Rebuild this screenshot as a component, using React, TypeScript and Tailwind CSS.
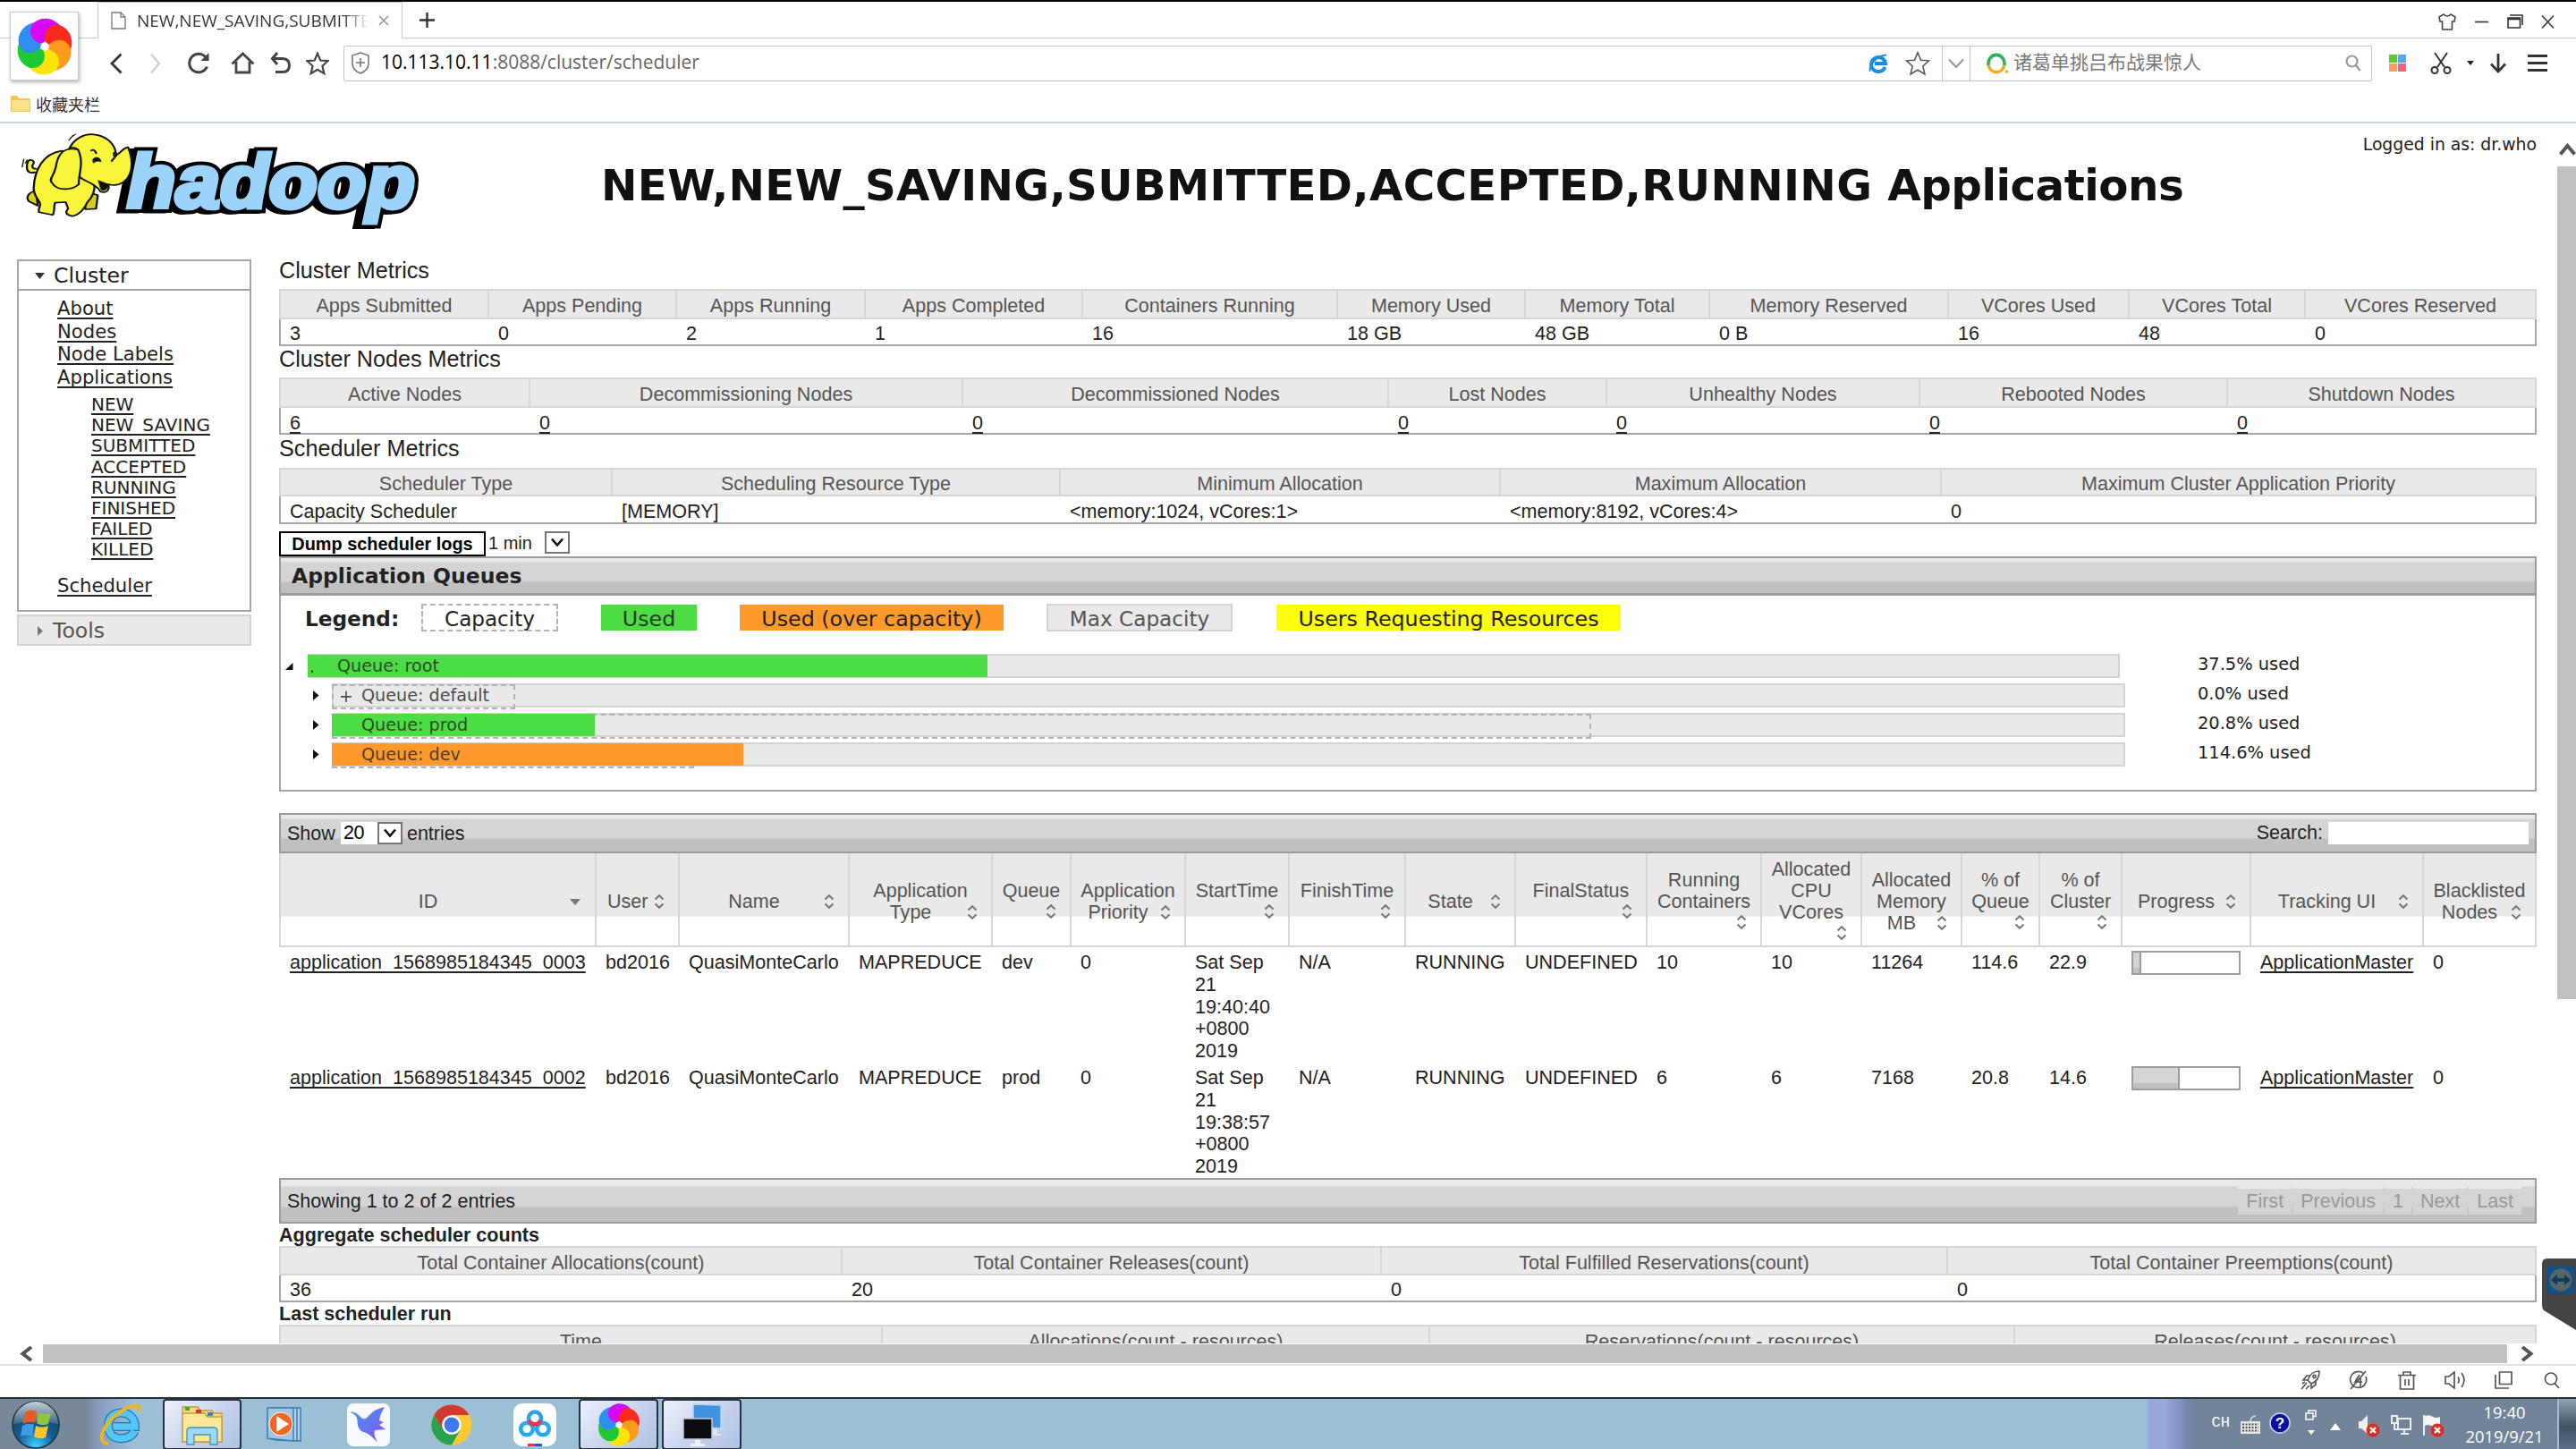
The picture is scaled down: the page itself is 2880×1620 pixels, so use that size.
import type { ReactNode } from 'react';

const UL = "underline decoration-2 underline-offset-[3px] [text-decoration-skip-ink:none]";

function Pinwheel({ size }: { size: number }) {
  const colors = ['#d908f5', '#fb2b1c', '#ff9a1a', '#ffe40a', '#1fc936', '#2f8ef2'];
  const petal = 'M0 -3 C-13 -5 -18 -19 -8 -27 C2 -34 20 -30 24 -9 C16 -18 6 -16 0 -3Z';
  return (
    <svg width={size} height={size} viewBox="-32 -32 64 64">
      {colors.map((c, i) => <path key={c} fill={c} transform={`rotate(${i * 60 - 8})`} d={petal} />)}
      <path fill={colors[0]} transform="rotate(-8)" d="M0 -3 C-13 -5 -18 -19 -8 -27 L2 -30 Q-2 -14 0 -3Z" />
      <circle r="4.5" fill="#fff" />
    </svg>
  );
}

function HadoopLogo() {
  return (
    <svg width="452" height="112" viewBox="20 145 452 112" className="overflow-visible">
      <g fontFamily="Liberation Sans, sans-serif" fontWeight="bold" fontStyle="italic" fontSize="84" strokeLinejoin="miter" strokeMiterlimit="3">
        <text x="136" y="233" textLength="322" lengthAdjust="spacingAndGlyphs" fill="#000" stroke="#000" strokeWidth="12">hadoop</text>
        <text x="142" y="232" textLength="322" lengthAdjust="spacingAndGlyphs" fill="#9bd3fb" stroke="#000" strokeWidth="13" paintOrder="stroke">hadoop</text>
        <text x="142" y="232" textLength="322" lengthAdjust="spacingAndGlyphs" fill="#9bd3fb" stroke="#9bd3fb" strokeWidth="5">hadoop</text>
      </g>
      <g transform="scale(0.4591 0.3333)" fill="#f8f53b" stroke="#111" strokeWidth="5" strokeLinejoin="round" strokeLinecap="round">
        <path fill="#d8cf1c" d="M88 640 C70 645 62 660 70 675 L92 690Z M205 640 L238 655 L234 700 L208 702Z" />
        <path d="M85 578 C66 585 62 565 68 542 C74 530 84 540 82 548 C76 556 78 566 88 566" />
        <path d="M150 506 C105 515 84 570 82 630 C82 660 96 670 98 685 C96 700 92 705 95 712 L128 721 C134 712 130 700 134 680 L160 678 L166 700 C158 712 160 720 176 725 C192 722 206 700 212 680 C226 660 232 640 230 615 L200 520Z" />
        <path d="M168 500 C180 465 205 448 228 451 C258 455 280 480 283 520 C296 512 298 496 312 494 C326 540 326 600 290 618 C276 624 266 618 264 618 C268 640 256 650 244 642 C236 620 212 610 200 600 C178 575 160 530 168 500Z" />
        <path d="M190 502 C150 490 140 525 136 560 C132 590 118 600 126 612 C140 645 178 636 192 618 C190 590 206 545 190 502Z" />
        <path fill="none" d="M168 500 C172 494 180 490 190 502 M222 505 C228 500 232 506 234 514 M272 540 L284 520 M282 512 C276 508 276 520 280 526" />
        <path fill="#111" strokeWidth="2" d="M226 535 C232 522 246 530 246 542 C238 538 232 542 228 546Z M240 606 L264 618 C262 636 252 644 246 636Z" />
        <path fill="none" strokeWidth="3" d="M168 470 L178 454 M172 462 L184 450 M54 560 L58 534 M62 548 L66 536" />
      </g>
    </svg>
  );
}

function StarIcon({ size, w = 2, color }: { size: number; w?: number; color: string }) {
  return (
    <svg width={size} height={size} viewBox="0 0 24 24" fill="none" stroke={color} strokeWidth={w} strokeLinejoin="miter">
      <path d="M12 1.5 L15 8.8 L22.8 9.3 L17 14.6 L18.8 22.3 L12 18.2 L5.2 22.3 L7 14.6 L1.2 9.3 L9 8.8Z" />
    </svg>
  );
}

function TitleBar() {
  return (
    <div className="flex h-[41px] shrink-0">
      <div className="w-[109px] border-b-[1px] border-[#b9cdd4]" />
      <div className="flex w-[341px] items-center border-x-[1px] border-t-[1px] border-[#b9cdd4] pl-[14px]">
        <svg width="17" height="20" viewBox="0 0 17 20" fill="#fff" stroke="#777" strokeWidth="1.3"><path d="M1 1 H11 L16 6 V19 H1Z M11 1 V6 H16" /></svg>
        <div className="ml-[12px] w-[262px] overflow-hidden whitespace-nowrap bg-[linear-gradient(90deg,#333_88%,#fff_99%)] bg-clip-text text-[19px] text-transparent font-['Open_Sans',sans-serif]">NEW,NEW_SAVING,SUBMITTE</div>
        <svg className="ml-[8px]" width="12" height="12" viewBox="0 0 12 12" stroke="#999" strokeWidth="1.7"><path d="M1 1 L11 11 M11 1 L1 11" /></svg>
      </div>
      <div className="flex flex-1 items-center border-b-[1px] border-[#b9cdd4]">
        <svg className="ml-[19px]" width="17" height="17" viewBox="0 0 17 17" stroke="#333" strokeWidth="2.4"><path d="M8.5 0 V17 M0 8.5 H17" /></svg>
        <div className="mt-[4px] mr-[24px] ml-auto flex items-center gap-[20px] text-[#333]">
          <svg width="20" height="19" viewBox="0 0 20 19" fill="none" stroke="#444" strokeWidth="1.6" strokeLinejoin="round"><path d="M6 1 Q10 5 14 1 L19 4 L18 9 H15.5 V18 H4.5 V9 H2 L1 4Z" /></svg>
          <svg width="17" height="17" viewBox="0 0 17 17" stroke="#444" strokeWidth="1.8"><path d="M1 8.5 H16" /></svg>
          <svg width="18" height="16" viewBox="0 0 18 16" fill="none" stroke="#333" strokeWidth="1.6"><path d="M1 4 H14.5 V15 H1Z M3 1 H17 V12 M1 5.5 H14.5" /></svg>
          <svg width="15" height="15" viewBox="0 0 15 15" stroke="#444" strokeWidth="1.7"><path d="M1 0.5 L14 14.5 M14 0.5 L1 14.5" /></svg>
        </div>
      </div>
    </div>
  );
}

function Cell({ w, children }: { w: string; children: ReactNode }) {
  return <div className={`flex shrink-0 items-center justify-center ${w}`}>{children}</div>;
}

function Toolbar() {
  return (
    <div className="flex h-[55px] shrink-0 items-center pl-[108px]">
      <Cell w="w-[44px]"><svg width="16" height="24" viewBox="0 0 16 24" fill="none" stroke="#333" strokeWidth="2.8"><path d="M13.5 1.5 L3 12 L13.5 22.5" /></svg></Cell>
      <Cell w="w-[44px]"><svg width="16" height="24" viewBox="0 0 16 24" fill="none" stroke="#ccc" strokeWidth="2"><path d="M3 1.5 L12 12 L3 22.5" /></svg></Cell>
      <Cell w="w-[52px]"><svg width="26" height="25" viewBox="0 0 26 25" fill="none" stroke="#444" strokeWidth="3"><path d="M22.5 16.5 A10.3 10.3 0 1 1 21 6" /><path d="M24.5 1 V10 H15.5Z" fill="#444" stroke="none" /></svg></Cell>
      <Cell w="w-[46px]"><svg width="27" height="25" viewBox="0 0 27 25" fill="none" stroke="#444" strokeWidth="2.8"><path d="M1.5 13.5 L13.5 2 L25.5 13.5 M6 11 V23 H21 V11" /></svg></Cell>
      <Cell w="w-[40px]"><svg width="24" height="25" viewBox="0 0 24 25" fill="none" stroke="#444" strokeWidth="3"><path d="M8 1 L2.5 7.5 L8 14 M3 7.5 H14 Q21.5 8 21.5 15 Q21.5 22.5 14 22.5 H6" /></svg></Cell>
      <Cell w="w-[42px]"><StarIcon size={26} w={2} color="#444" /></Cell>
      <div className="ml-[8px] flex h-[40px] w-[2268px] shrink-0 items-center rounded-[2px] border-[1px] border-[#c4c4c4]">
        <Cell w="w-[36px]">
          <svg width="20" height="25" viewBox="0 0 20 25" fill="none" stroke="#777" strokeWidth="1.6"><path d="M10 1 L19 4 V13 C19 18 15 22 10 24 C5 22 1 18 1 13 V4Z M10 7 V17 M5 12 H15" /></svg>
        </Cell>
        <div className="mb-[1px] ml-[5px] whitespace-nowrap text-[21px] text-[#666] font-['Open_Sans',sans-serif]"><span className="text-black">10.113.10.11</span>:8088/cluster/scheduler</div>
        <div className="ml-auto flex h-full items-center">
          <Cell w="w-[42px]">
            <svg width="22" height="22" viewBox="0 0 22 22" fill="none"><path d="M18.5 15 A8 8 0 1 1 19 11 H7" stroke="#1b8fdf" strokeWidth="4" /><path d="M1.5 20 C1 12 10 2 20 1.5" stroke="#1b8fdf" strokeWidth="1.8" /></svg>
          </Cell>
          <Cell w="w-[50px]"><div className="mr-[5px]"><StarIcon size={28} w={1.3} color="#555" /></div></Cell>
          <div className="flex h-full w-[32px] items-center justify-center border-x-[1px] border-[#c4c4c4]">
            <svg width="18" height="12" viewBox="0 0 18 12" fill="none" stroke="#999" strokeWidth="2.2"><path d="M1 1.5 L9 10 L17 1.5" /></svg>
          </div>
          <Cell w="w-[48px]">
            <svg className="ml-[12px]" width="25" height="24" viewBox="0 0 25 24" fill="none" strokeWidth="3.6"><path d="M2.2 14 A9 9.6 0 1 1 19.8 14" stroke="#2eb157" /><path d="M2.2 14 A9 9.6 0 0 0 19.8 14" stroke="#f5ab1c" /><circle cx="22.5" cy="21" r="1.8" fill="#f5ab1c" /></svg>
          </Cell>
          <div className="mb-[3px] w-[360px] text-[21px] text-[#777] font-['Noto_Sans_CJK_SC',sans-serif]">诸葛单挑吕布战果惊人</div>
          <Cell w="w-[40px]"><svg width="18" height="19" viewBox="0 0 18 19" fill="none" stroke="#999" strokeWidth="2.2"><circle cx="7.5" cy="7.5" r="6" /><path d="M12 12 L16.5 18" /></svg></Cell>
        </div>
      </div>
      <Cell w="w-[57px]">
        <div className="grid grid-cols-2 gap-[1px]">
          <i className="h-[9px] w-[9px] bg-[#58ce28]" /><i className="h-[9px] w-[9px] bg-[#4ea8fb]" />
          <i className="h-[9px] w-[9px] bg-[#fb9a67]" /><i className="h-[9px] w-[9px] bg-[#f96079]" />
        </div>
      </Cell>
      <Cell w="w-[40px]"><svg width="24" height="25" viewBox="0 0 24 25" fill="none" stroke="#333" strokeWidth="2"><path d="M5 1 L16 17 M19 1 L8 17" /><circle cx="5" cy="20.5" r="3.5" /><circle cx="19" cy="20.5" r="3.5" /></svg></Cell>
      <Cell w="w-[26px]"><svg width="8" height="5" viewBox="0 0 8 5"><path d="M0 0 H8 L4 5Z" fill="#222" /></svg></Cell>
      <Cell w="w-[36px]"><svg width="20" height="22" viewBox="0 0 20 22" fill="none" stroke="#333" strokeWidth="2.8"><path d="M10 0 V19 M2 11.5 L10 20 L18 11.5" /></svg></Cell>
      <Cell w="w-[52px]"><svg width="22" height="19" viewBox="0 0 22 19" stroke="#333" strokeWidth="3"><path d="M0 1.5 H22 M0 9.5 H22 M0 17.5 H22" /></svg></Cell>
    </div>
  );
}

function Nav() {
  const states = ['NEW', 'NEW_SAVING', 'SUBMITTED', 'ACCEPTED', 'RUNNING', 'FINISHED', 'FAILED', 'KILLED'];
  return (
    <div className="mt-[10px] ml-[19px] w-[262px] shrink-0 text-[#222] font-['DejaVu_Sans',sans-serif]">
      <div className="flex h-[33px] items-center border-2 border-b-0 border-[#a6a6a6] pt-[2px] pl-[18px] text-[23.6px]">
        <svg className="mr-[10px]" width="11" height="7" viewBox="0 0 11 7"><path d="M0 0 H11 L5.5 7Z" fill="#333" /></svg>
        Cluster
      </div>
      <div className="h-[361px] border-2 border-[#a6a6a6] pt-[7px] pl-[43px] text-[21.15px] leading-[25.5px]">
        {['About', 'Nodes', 'Node Labels', 'Applications'].map((t) => <div key={t}><span className={UL}>{t}</span></div>)}
        <div className="mt-[7px] mb-[15px] ml-[38px] text-[20px] leading-[23.2px]">
          {states.map((t) => <div key={t}><span className={UL}>{t}</span></div>)}
        </div>
        <span className={UL}>Scheduler</span>
      </div>
      <div className="mt-[3px] flex h-[35px] items-center border-2 border-[#d3d3d3] bg-[#e9e9e9] pt-[2px] pl-[21px] text-[23.6px] text-[#555]">
        <svg className="mr-[10px]" width="7" height="11" viewBox="0 0 7 11"><path d="M0 0 V11 L6 5.5Z" fill="#777" /></svg>
        Tools
      </div>
    </div>
  );
}

type MetricsProps = { cols: string; heads: string[]; values: string[]; link?: boolean; head: string; row: string };

function Metrics({ cols, heads, values, link, head, row }: MetricsProps) {
  return (
    <div className="shrink-0">
      <div className={`grid ${cols} ${head} border-y-2 border-l-2 border-[#d6d6d6] bg-[#e9e9e9] text-[#555]`}>
        {heads.map((h) => <div key={h} className="flex items-center justify-center border-r-2 border-[#d6d6d6] pt-[4px] whitespace-nowrap">{h}</div>)}
      </div>
      <div className={`grid ${cols} ${row} items-center border-x-2 border-b-2 border-[#a6a6a6]`}>
        {values.map((v, i) => <div key={i} className="pl-[10px] whitespace-nowrap"><span className={link ? UL : ''}>{v}</span></div>)}
      </div>
    </div>
  );
}

function SelectArrow() {
  return (
    <div className="flex h-[25px] w-[28px] items-center justify-center border-2 border-[#777] bg-white">
      <svg width="14" height="11" viewBox="0 0 14 11" fill="none" stroke="#111" strokeWidth="2.6"><path d="M1 1.5 L7 8.5 L13 1.5" /></svg>
    </div>
  );
}

type QueueProps = { name: string; used: string; fill?: string; cap?: string; mark?: string; root?: boolean };

function QueueRow({ name, used, fill, cap, mark, root }: QueueProps) {
  return (
    <div className={`flex h-[33px] items-start ${root ? 'pl-[5px]' : 'pl-[36px]'}`}>
      <div className={`flex h-[27px] items-center ${root ? 'w-[25px]' : 'w-[21px]'}`}>
        {root
          ? <svg width="9" height="8" viewBox="0 0 9 8"><path d="M8.5 0 V8 H0Z" fill="#111" /></svg>
          : <svg width="7" height="11" viewBox="0 0 7 11"><path d="M0 0 V11 L6.5 5.5Z" fill="#111" /></svg>}
      </div>
      <div className={`relative flex h-[27px] items-center border-2 border-[#d3d3d3] bg-[#e9e9e9] ${root ? 'w-[2026px]' : 'w-[2005px]'}`}>
        {cap && <div className={`absolute -top-[1px] -left-[2px] h-[28px] border-2 border-dashed border-[#b3b3b3] ${cap}`} />}
        {fill && <div className={`absolute -top-[1px] -left-[2px] h-[25px] ${fill}`} />}
        <span className={`relative w-[31px] text-[19px] opacity-80 ${mark === '+' ? 'pl-[6px]' : ''}`}>{mark}</span>
        <span className="relative text-[#222]/80">{name}</span>
      </div>
      <div className={`flex h-[24px] items-center text-[19.4px] text-[#222] ${root ? 'ml-[87px]' : 'ml-[81px]'}`}>{used}</div>
    </div>
  );
}

function SortIcon() {
  return (
    <div className="flex w-[24px] shrink-0 justify-center pl-[1px]">
      <svg width="12" height="16" viewBox="0 0 12 16" fill="none" stroke="#777" strokeWidth="2"><path d="M1.5 5.5 L6 1.2 L10.5 5.5 M1.5 10.5 L6 14.8 L10.5 10.5" /></svg>
    </div>
  );
}

const headers: { lines: string[]; own?: boolean }[] = [
  { lines: ['ID'] }, { lines: ['User'] }, { lines: ['Name'] }, { lines: ['Application', 'Type'] }, { lines: ['Queue'], own: true },
  { lines: ['Application', 'Priority'] }, { lines: ['StartTime'], own: true }, { lines: ['FinishTime'], own: true }, { lines: ['State'] },
  { lines: ['FinalStatus'], own: true }, { lines: ['Running', 'Containers'], own: true }, { lines: ['Allocated', 'CPU', 'VCores'], own: true },
  { lines: ['Allocated', 'Memory', 'MB'] }, { lines: ['% of', 'Queue'], own: true }, { lines: ['% of', 'Cluster'], own: true },
  { lines: ['Progress'] }, { lines: ['Tracking UI'] }, { lines: ['Blacklisted', 'Nodes'] },
];

const APP_COLS = "grid-cols-[353px_93px_190px_160px_88px_128px_116px_130px_123px_147px_128px_112px_112px_87px_92px_144px_193px_126px]";

const apps = [
  ['application_1568985184345_0003', 'bd2016', 'QuasiMonteCarlo', 'MAPREDUCE', 'dev', '0', 'Sat Sep|21|19:40:40|+0800|2019', 'N/A', 'RUNNING', 'UNDEFINED', '10', '10', '11264', '114.6', '22.9', 'w-[9px]', 'ApplicationMaster', '0'],
  ['application_1568985184345_0002', 'bd2016', 'QuasiMonteCarlo', 'MAPREDUCE', 'prod', '0', 'Sat Sep|21|19:38:57|+0800|2019', 'N/A', 'RUNNING', 'UNDEFINED', '6', '6', '7168', '20.8', '14.6', 'w-[52px]', 'ApplicationMaster', '0'],
];

const BAR = "bg-[linear-gradient(180deg,#e9e9e9_0px,#e9e9e9_4px,#d4d4d4_5px,#d4d4d4_26px,#c0c0c0_27px,#c0c0c0_100%)]";
const FOOT_BAR = "bg-[linear-gradient(180deg,#e9e9e9_0px,#e9e9e9_7px,#d4d4d4_8px,#d4d4d4_30px,#c0c0c0_31px,#c0c0c0_100%)]";

function AppsTable() {
  return (
    <div className="mt-[24px] shrink-0">
      <div className={`flex h-[45px] items-center border-2 border-[#9c9c9c] ${BAR}`}>
        <span className="mt-[1px] ml-[7px]">Show</span>
        <div className="ml-[6px] flex h-[25px] w-[69px] items-center justify-between bg-white pl-[3px] text-black"><span className="-mt-[1px] tracking-[-0.4px]">20</span><SelectArrow /></div>
        <span className="ml-[5px]">entries</span>
        <span className="mr-[6px] mb-[1px] ml-auto">Search:</span>
        <div className="mr-[7px] h-[25px] w-[224px] bg-white" />
      </div>
      <div className={`grid h-[105px] ${APP_COLS} border-b-2 border-l-2 border-[#d6d6d6] bg-[linear-gradient(180deg,#e9e9e9_70px,#fff_71px)] text-[#555]`}>
        {headers.map(({ lines, own }, i) => (
          <div key={i} className="flex flex-col justify-center border-r-2 border-[#d6d6d6] pt-[5px] leading-[24px] whitespace-nowrap">
            {lines.map((l, k) => {
              const beside = !own && k === lines.length - 1;
              return beside ? (
                <div key={k} className="flex items-center pr-[10px] pl-[12px]">
                  <span className="flex flex-1 justify-center">{l}</span>
                  {i === 0
                    ? <div className="flex w-[24px] justify-center"><svg width="12" height="7" viewBox="0 0 12 7"><path d="M0 0 H12 L6 7Z" fill="#777" /></svg></div>
                    : <SortIcon />}
                </div>
              ) : <div key={k} className="text-center">{l}</div>;
            })}
            {own && <div className="flex h-[24px] items-center justify-end pr-[10px] pb-[3px]"><SortIcon /></div>}
          </div>
        ))}
      </div>
      {apps.map((row) => (
        <div key={row[0]} className={`grid h-[129px] ${APP_COLS} border-l-2 border-transparent pt-[5px] leading-[24.8px]`}>
          {row.map((v, i) => (
            <div key={i} className="pl-[10px] whitespace-nowrap">
              {i === 15 ? (
                <div className="-mt-[1px] h-[27px] w-[122px] border-2 border-[#9c9c9c]">
                  <div className={`h-full border-r-2 border-[#9c9c9c] bg-[linear-gradient(180deg,#d4d4d4_75%,#c0c0c0_76%)] ${v}`} />
                </div>
              ) : v.split('|').map((l) => <div key={l}><span className={i === 0 || i === 16 ? UL : ''}>{l}</span></div>)}
            </div>
          ))}
        </div>
      ))}
      <div className={`flex h-[51px] items-center border-2 border-[#9c9c9c] ${FOOT_BAR}`}>
        <span className="ml-[7px]">Showing 1 to 2 of 2 entries</span>
        <div className="mr-[15px] mb-[1px] ml-auto flex h-[32px] gap-[1px] text-[#999]">
          {['First', 'Previous', '1', 'Next', 'Last'].map((t) => (
            <span key={t} className="flex items-center border-t-[3px] border-[#e9e9e9] bg-[#d4d4d4] px-[9px] pb-[2px]">{t}</span>
          ))}
        </div>
      </div>
    </div>
  );
}

function Main() {
  return (
    <div className="ml-[31px] flex w-[2524px] shrink-0 flex-col text-[21.55px] leading-[24px] text-[#222] font-['Liberation_Sans',Arial,sans-serif]">
      <h2 className="flex h-[43px] shrink-0 items-center text-[25.2px]">Cluster Metrics</h2>
      <Metrics head="h-[34px]" row="h-[30px] pt-[3px]"
        cols="grid-cols-[233px_210px_211px_243px_285px_210px_206px_267px_202px_197px_1fr]"
        heads={['Apps Submitted', 'Apps Pending', 'Apps Running', 'Apps Completed', 'Containers Running', 'Memory Used', 'Memory Total', 'Memory Reserved', 'VCores Used', 'VCores Total', 'VCores Reserved']}
        values={['3', '0', '2', '1', '16', '18 GB', '48 GB', '0 B', '16', '48', '0']} />
      <h2 className="flex h-[35px] shrink-0 items-center pb-[8px] text-[25.2px]">Cluster Nodes Metrics</h2>
      <Metrics link head="h-[34px]" row="h-[30px] pt-[5px]"
        cols="grid-cols-[279px_484px_476px_244px_350px_344px_1fr]"
        heads={['Active Nodes', 'Decommissioning Nodes', 'Decommissioned Nodes', 'Lost Nodes', 'Unhealthy Nodes', 'Rebooted Nodes', 'Shutdown Nodes']}
        values={['6', '0', '0', '0', '0', '0', '0']} />
      <h2 className="flex h-[37px] shrink-0 items-center pb-[8px] text-[25.2px]">Scheduler Metrics</h2>
      <Metrics head="h-[32px]" row="h-[31px] pt-[4px]"
        cols="grid-cols-[371px_501px_492px_493px_1fr]"
        heads={['Scheduler Type', 'Scheduling Resource Type', 'Minimum Allocation', 'Maximum Allocation', 'Maximum Cluster Application Priority']}
        values={['Capacity Scheduler', '[MEMORY]', '<memory:1024, vCores:1>', '<memory:8192, vCores:4>', '0']} />
      <div className="flex h-[36px] shrink-0 items-end text-black">
        <div className="flex h-[28px] w-[231px] items-center justify-center border-2 border-black text-[19.9px] font-bold">Dump scheduler logs</div>
        <div className="mb-[3px] ml-[3px] flex items-center text-[20px] text-[#222]"><span className="w-[63px]">1 min</span><SelectArrow /></div>
      </div>
      <div className={`flex h-[44px] shrink-0 items-center border-2 border-b-[3px] border-[#9c9c9c] pl-[12px] text-[23.5px] font-bold font-['DejaVu_Sans',sans-serif] ${BAR}`}>Application Queues</div>
      <div className="h-[219px] shrink-0 border-2 border-t-0 border-[#a6a6a6] font-['DejaVu_Sans',sans-serif]">
        <div className="mt-[9px] ml-[27px] flex h-[31px] items-center text-[23.75px]">
          <span className="w-[130px] pt-[2px] text-[23.2px] font-bold">Legend:</span>
          <span className="flex h-[31px] w-[153px] items-center justify-center border-2 border-dashed border-[#b3b3b3] pt-[2px] text-[23.1px]">Capacity</span>
          <span className="ml-[48px] flex h-[29px] w-[107px] items-center justify-center bg-[#4cdd45] pt-[2px] text-[#222]/90">Used</span>
          <span className="ml-[48px] flex h-[29px] w-[295px] items-center justify-center bg-[#ff992b] pt-[2px]">Used (over capacity)</span>
          <span className="ml-[48px] flex h-[31px] w-[208px] items-center justify-center border-2 border-[#d3d3d3] bg-[#e9e9e9] pt-[2px] text-[23.2px] text-[#555]">Max Capacity</span>
          <span className="ml-[49px] flex h-[29px] w-[385px] items-center justify-center bg-[#ffff0a] pt-[2px]">Users Requesting Resources</span>
        </div>
        <div className="mt-[25px] text-[19.2px]">
          <QueueRow root name="Queue: root" used="37.5% used" mark="." fill="w-[760px] bg-[#4cdd45]" />
          <QueueRow name="Queue: default" used="0.0% used" mark="+" cap="w-[205px]" />
          <QueueRow name="Queue: prod" used="20.8% used" cap="w-[1408px]" fill="w-[294px] bg-[#4cdd45]" />
          <QueueRow name="Queue: dev" used="114.6% used" cap="w-[405px]" fill="w-[460px] bg-[#ff992b]" />
        </div>
      </div>
      <AppsTable />
      <h3 className="flex h-[25px] shrink-0 items-center font-bold">Aggregate scheduler counts</h3>
      <Metrics head="h-[33px]" row="h-[30px] pt-[3px]"
        cols="grid-cols-[628px_603px_633px_1fr]"
        heads={['Total Container Allocations(count)', 'Total Container Releases(count)', 'Total Fulfilled Reservations(count)', 'Total Container Preemptions(count)']}
        values={['36', '20', '0', '0']} />
      <h3 className="flex h-[25px] shrink-0 items-center font-bold">Last scheduler run</h3>
      <Metrics head="h-[33px]" row="h-[30px]"
        cols="grid-cols-[673px_612px_654px_1fr]"
        heads={['Time', 'Allocations(count - resources)', 'Reservations(count - resources)', 'Releases(count - resources)']}
        values={['', '', '', '']} />
    </div>
  );
}

function StatusBar() {
  return (
    <div className="flex h-[37px] shrink-0 items-center justify-end border-t-2 border-[#e2e2e2] bg-white pr-[18px] pb-[3px] text-[#555]">
      <svg className="mr-[31px]" width="23" height="22" viewBox="0 0 23 22" fill="none" stroke="#555" strokeWidth="1.7"><path d="M21 1 C15 1 10 5 8 11 L12 15 C18 13 21 8 21 1Z M8 11 L3 11 L7 6 L11 6 M12 15 L12 20 L17 16 L17 11 M7 14 L1 21 M10 17 L6 21 M5 13 L2 15" /><circle cx="15.5" cy="7" r="1.6" /></svg>
      <svg className="mr-[33px]" width="22" height="22" viewBox="0 0 22 22" fill="none" stroke="#555" strokeWidth="1.7"><path d="M17 4 A9 9 0 1 0 19 7 M2 21 L19 1 M12 5 L7 13 H15 M13 8 V18" /></svg>
      <svg className="mr-[32px]" width="20" height="21" viewBox="0 0 20 21" fill="none" stroke="#555" strokeWidth="1.7"><path d="M0 4.5 H20 M6 4 V1 H14 V4 M2.5 5 V20 H17.5 V5 M8 9 V16 M12 9 V16" /></svg>
      <svg className="mr-[32px]" width="24" height="20" viewBox="0 0 24 20" fill="none" stroke="#555" strokeWidth="1.7"><path d="M1 6 H5 L11 1 V19 L5 14 H1Z M15 6.5 Q17.5 10 15 13.5 M19 2 Q25 10 19 18" /></svg>
      <svg className="mr-[35px]" width="20" height="20" viewBox="0 0 20 20" fill="none" stroke="#555" strokeWidth="1.7"><path d="M5.5 1 H19 V14.5 H5.5Z M1 4 V19 H16" /></svg>
      <svg width="18" height="19" viewBox="0 0 18 19" fill="none" stroke="#555" strokeWidth="1.7"><circle cx="8" cy="7.5" r="6.5" /><path d="M12 12.5 L17 18" /></svg>
    </div>
  );
}

function TaskButton({ children, w, on }: { children: ReactNode; w: string; on?: string }) {
  return <div className={`flex h-full shrink-0 items-center justify-center ${w} ${on ?? ''}`}>{children}</div>;
}

const ACTIVE = "rounded-[4px] border-2 border-[#26323d] bg-[linear-gradient(135deg,#eef2fa,#c6d2ee_55%,#b0c4e2)]";

function Taskbar() {
  return (
    <div className="flex h-[59px] shrink-0 border-t-2 border-[#2a3038] bg-[linear-gradient(90deg,#76889a_0px,#76889a_95px,#8b9fc4_115px,#9bbfd5_150px,#9bbfd5_2400px,#98a8d8_2402px,#98a8d8_2420px,#7488ae_2445px,#728499_2455px)]">
      <TaskButton w="w-[80px]">
        <svg width="56" height="54" viewBox="0 0 56 54">
          <defs>
            <radialGradient id="orb" cx="50%" cy="95%" r="90%"><stop offset="0" stopColor="#3fd0ff" /><stop offset="0.45" stopColor="#135c94" /><stop offset="1" stopColor="#20425c" /></radialGradient>
            <linearGradient id="gl" x1="0" y1="0" x2="0" y2="1"><stop offset="0" stopColor="#fff" stopOpacity="0.75" /><stop offset="1" stopColor="#fff" stopOpacity="0.15" /></linearGradient>
          </defs>
          <circle cx="28" cy="27" r="26" fill="url(#orb)" stroke="#1c3346" strokeWidth="1.5" />
          <path d="M3 26 A25 25 0 0 1 53 26 Q28 20 3 26Z" fill="url(#gl)" />
          <path fill="#ea5a24" d="M16 13 Q22 9 29 12 L27 25 Q20 22 14 26Z" />
          <path fill="#8cc63e" d="M31 13 Q37 17 45 13 L42 26 Q35 29 29 25Z" />
          <path fill="#3f9be8" d="M13 28 Q20 24 26 27 L24 40 Q17 37 11 40Z" />
          <path fill="#fcc52c" d="M28 28 Q35 31 42 28 L39 41 Q32 44 26 40Z" />
        </svg>
      </TaskButton>
      <TaskButton w="w-[102px]">
        <svg className="ml-[5px]" width="48" height="48" viewBox="0 0 48 48" fill="none">
          <path d="M40.5 31 C36 42 11 44 11 25 C11 5 41 6 41 26 H17" stroke="#1a78b8" strokeWidth="10" />
          <path d="M40.5 31 C36 42 11 44 11 25 C11 5 41 6 41 26 H17" stroke="#55c6f6" strokeWidth="7.5" />
          <path d="M11 45 C-5 44 8 20 24 10 C38 0 48 0 45 9" stroke="#eab622" strokeWidth="4" />
        </svg>
      </TaskButton>
      <TaskButton w="w-[88px]" on={ACTIVE}>
        <svg width="50" height="46" viewBox="0 0 50 46" stroke="#c49a36" strokeWidth="1.3">
          <path fill="#f5dc84" d="M3 10 V3 H20 L23 7 H36 L38 10 H47 V42 H3Z" />
          <path fill="#fbe898" d="M3 10 H28 L31 14 H47 V42 H3Z" />
          <path stroke="none" fill="#3aa83a" d="M6 3 h5 v4 h-5z" /><path stroke="none" fill="#cf3a2a" d="M18 6 h6 v4 h-6z" /><path stroke="none" fill="#2f82cc" d="M31 9 h6 v4 h-6z" />
          <path fill="#9fd8f5" stroke="#4292c4" d="M8 45 V30 Q8 26 12 26 H38 Q42 26 42 30 V45 H34 V34 H16 V45Z" />
        </svg>
      </TaskButton>
      <TaskButton w="w-[96px]">
        <svg className="ml-[4px]" width="46" height="42" viewBox="0 0 46 42">
          <path fill="#aad0ea" stroke="#3f7fb0" strokeWidth="1.5" d="M10 2 H39 V39 L10 38Z M6 2 H35 V39 L6 37Z" /><path fill="#9cc8e6" stroke="#3f7fb0" strokeWidth="1.5" d="M2 2 H31 V39 L2 36Z" />
          <circle cx="17" cy="20" r="13" fill="#f2651f" stroke="#fff" strokeWidth="1" /><path fill="#fff" d="M12 11 L26 20 L12 29Z" />
        </svg>
      </TaskButton>
      <TaskButton w="w-[92px]">
        <svg width="48" height="48" viewBox="0 0 48 48">
          <defs><linearGradient id="bird" x1="0" y1="0" x2="1" y2="1"><stop offset="0" stopColor="#3f9df6" /><stop offset="1" stopColor="#8a4ff0" /></linearGradient></defs>
          <rect width="48" height="48" rx="7" fill="#f8f8ff" />
          <path fill="url(#bird)" d="M3 10 Q8 8 13 13 C17 18 20 19 24 14 Q31 6 42 4 Q37 12 36 19 L41 21 L36 24 L43 29 L31 30 Q29 35 34 43 C28 38 24 33 18 32 C11 29 12 22 11 16 Q8 11 3 10Z" />
        </svg>
      </TaskButton>
      <TaskButton w="w-[94px]">
        <svg width="46" height="46" viewBox="-23 -23 46 46">
          <circle r="22.5" fill="#fcc934" /><path fill="#2ba24c" d="M-19.5 -11.3 A22.5 22.5 0 0 0 0 22.5 L9.5 6 L-9.5 5Z" />
          <path fill="#d23a2e" d="M-19.5 -11.3 L-9.5 6 L0 -11 H19.5 A22.5 22.5 0 0 0 -19.5 -11.3Z" />
          <circle r="10.8" fill="#fff" /><circle r="8.4" fill="#3f79ee" />
        </svg>
      </TaskButton>
      <TaskButton w="w-[92px]">
        <svg width="48" height="48" viewBox="0 0 48 48" fill="none" strokeWidth="4.6">
          <rect width="48" height="48" rx="10" fill="#fff" />
          <circle cx="15" cy="28.5" r="6.8" stroke="#27a9f0" /><circle cx="33" cy="28.5" r="6.8" stroke="#27a9f0" /><circle cx="24" cy="16.5" r="7" stroke="#2f9df0" /><path d="M17.5 19 A7 7 0 0 0 30.5 19" stroke="#e8344f" />
          <path d="M16 46.5 H24" stroke="#e8344f" strokeWidth="3" /><path d="M24 46.5 H32" stroke="#2456c8" strokeWidth="3" />
        </svg>
      </TaskButton>
      <div className="w-[3px]" />
      <TaskButton w="w-[89px]" on={ACTIVE}><Pinwheel size={50} /></TaskButton>
      <div className="w-[4px]" />
      <TaskButton w="w-[89px]" on={ACTIVE}>
        <svg width="46" height="50" viewBox="0 0 46 50">
          <path fill="#3f93e0" stroke="#b9d6ee" strokeWidth="1.5" d="M13 2 L44 3 V29 L13 27Z" /><path fill="#dfe6ee" d="M36 30 h4 v5 h4 v2 h-12 z" />
          <path fill="#0b0d10" stroke="#c8ccd2" strokeWidth="1.5" d="M2 18 H34 V41 H2Z" /><path fill="#f0f2f5" d="M15 42 H21 V46 H26 V49 H10 V46 H15Z" />
        </svg>
      </TaskButton>
      <div className="ml-auto flex h-full items-center text-white font-['Open_Sans',sans-serif]">
        <span className="mr-[11px] mb-[3px] text-[17px] font-['Liberation_Mono',monospace]">CH</span>
        <svg width="24" height="22" viewBox="0 0 24 22"><path fill="none" stroke="#ddd" strokeWidth="1.5" d="M12 7 Q12 2 18 1" /><rect x="1" y="7" width="22" height="14" fill="#e4e4e4" /><path stroke="#555" strokeWidth="2" strokeDasharray="2 1.5" d="M3 10.5 H21 M3 14 H21 M3 17.5 H21" /></svg>
        <svg className="mb-[3px] ml-[9px]" width="24" height="24" viewBox="0 0 24 24"><circle cx="12" cy="12" r="11" fill="#0b0fa0" stroke="#cfd4f0" strokeWidth="1.5" /><text x="12" y="18" textAnchor="middle" fontSize="17" fontWeight="bold" fill="#fff" fontFamily="Liberation Sans, sans-serif">?</text></svg>
        <div className="mb-[6px] ml-[16px] flex flex-col items-center gap-[11px]">
          <svg width="13" height="12" viewBox="0 0 13 12" fill="none" stroke="#fff" strokeWidth="1.5"><path d="M4 3 V1 H12 V7.5 H9 M1 4 H9 V11 H1Z" /></svg>
          <svg width="8" height="5" viewBox="0 0 8 5"><path d="M0 0 H8 L4 5Z" fill="#fff" /></svg>
        </div>
        <svg className="mt-[4px] ml-[15px]" width="12" height="8" viewBox="0 0 12 8"><path d="M6 0 L12 8 H0Z" fill="#fff" /></svg>
        <svg className="mt-[2px] ml-[19px]" width="25" height="26" viewBox="0 0 25 26"><path fill="#eee" d="M1 8 H4 L11 1 V22 L4 16 H1Z" /><circle cx="17" cy="18" r="7.5" fill="#dd2c22" /><path stroke="#fff" strokeWidth="2.4" d="M14 15 L20 21 M20 15 L14 21" /></svg>
        <svg className="ml-[12px]" width="24" height="24" viewBox="0 0 24 24" fill="none" stroke="#eee" strokeWidth="2"><path d="M8 5 H22 V17 H8Z M11 22 H20 M15 17 V22" /><path d="M1 2 H7 V10 H1Z M4 10 V17 H8" /></svg>
        <svg className="mt-[2px] ml-[11px]" width="25" height="26" viewBox="0 0 25 26"><path stroke="#eee" strokeWidth="2" d="M2 1 V24" /><path fill="#f4f4f4" d="M3 2 Q8 0 12 3 Q16 5 20 3 V13 Q14 15 10 13 Q7 11 3 13Z" /><circle cx="17" cy="18" r="7.5" fill="#dd2c22" /><path stroke="#fff" strokeWidth="2.4" d="M14 15 L20 21 M20 15 L14 21" /></svg>
        <div className="mb-[1px] ml-[21px] flex w-[92px] flex-col items-center text-[18.4px] leading-[27px]"><span>19:40</span><span>2019/9/21</span></div>
        <div className="ml-[13px] h-full w-[21px] border-l-2 border-[#a9bccb] bg-[linear-gradient(180deg,#8fa3b5,#3f5264_55%,#5c7288)]" />
      </div>
    </div>
  );
}

export default function App() {
  return (
    <div className="relative flex h-[1620px] w-[2880px] flex-col overflow-hidden bg-white">
      <div className="h-[2px] shrink-0 bg-black" />
      <TitleBar />
      <Toolbar />
      <div className="flex h-[40px] shrink-0 items-center border-b-2 border-[#c9d6da] pb-[2px] pl-[12px] text-[18px] text-[#333] font-['Noto_Sans_CJK_SC',sans-serif]">
        <svg className="mr-[6px]" width="22" height="18" viewBox="0 0 22 18"><path d="M0 1.5 Q0 0 1.5 0 H7 L9.5 3 H20 Q22 3 22 5 V18 H0Z" fill="#f3c550" /><path d="M1 5 H21 V17 H1Z" fill="#fde28b" /></svg>
        收藏夹栏
      </div>
      <div className="absolute top-[13px] left-[11px] flex h-[77px] w-[77px] items-center justify-center border border-[#ccc] bg-white shadow-[1px_2px_4px_rgba(0,0,0,0.3)]"><Pinwheel size={66} /></div>
      <div className="flex h-[1364px] shrink-0 overflow-hidden">
        <div className="w-[2859px] shrink-0">
          <div className="flex h-[142px]">
            <div className="mt-[7px] ml-[20px] w-[652px] shrink-0"><HadoopLogo /></div>
            <h1 className="mt-[39px] whitespace-nowrap text-[48.4px] leading-[60px] font-bold text-[#111] font-['DejaVu_Sans',sans-serif]"><span className="tracking-[0.3px]">NEW,NEW_SAVING,SUBMITTED,ACCEPTED,RUNNING </span><span className="tracking-[-0.55px]">Applications</span></h1>
            <div className="mt-[12px] mr-[23px] ml-auto whitespace-nowrap text-[18.8px] leading-[24px] text-[#222] font-['DejaVu_Sans',sans-serif]">Logged in as: dr.who</div>
          </div>
          <div className="flex"><Nav /><Main /></div>
        </div>
        <div className="w-[21px] pt-[22px]">
          <svg className="ml-[2px]" width="19" height="14" viewBox="0 0 19 14" fill="none" stroke="#555" strokeWidth="4"><path d="M1.5 12.5 L9.5 3 L17.5 12.5" /></svg>
          <div className="mt-[12px] h-[931px] bg-[#c1c1c1]" />
        </div>
      </div>
      <div className="flex h-[23px] shrink-0 items-center">
        <svg className="ml-[22px]" width="15" height="17" viewBox="0 0 15 17" fill="none" stroke="#555" strokeWidth="4"><path d="M13 1 L3.5 8.5 L13 16" /></svg>
        <div className="ml-[11px] h-[21px] w-[2755px] bg-[#c1c1c1]" />
        <svg className="ml-[15px]" width="15" height="17" viewBox="0 0 15 17" fill="none" stroke="#555" strokeWidth="4"><path d="M2 1 L11.5 8.5 L2 16" /></svg>
      </div>
      <StatusBar />
      <Taskbar />
      <svg className="absolute top-[1407px] right-0" width="38" height="80" viewBox="0 0 38 80">
        <path fill="#444" d="M6 0 H38 V80 L2 58 Q0 56 0 52 V6 Q0 0 6 0Z" /><rect x="6" y="9" width="30" height="30" fill="#12508a" />
        <circle cx="21" cy="24" r="12.5" fill="#566" /><path fill="#0e3a63" d="M10 24 L17 18 V22 H25 V18 L32 24 L25 30 V26 H17 V30Z" />
      </svg>
    </div>
  );
}
